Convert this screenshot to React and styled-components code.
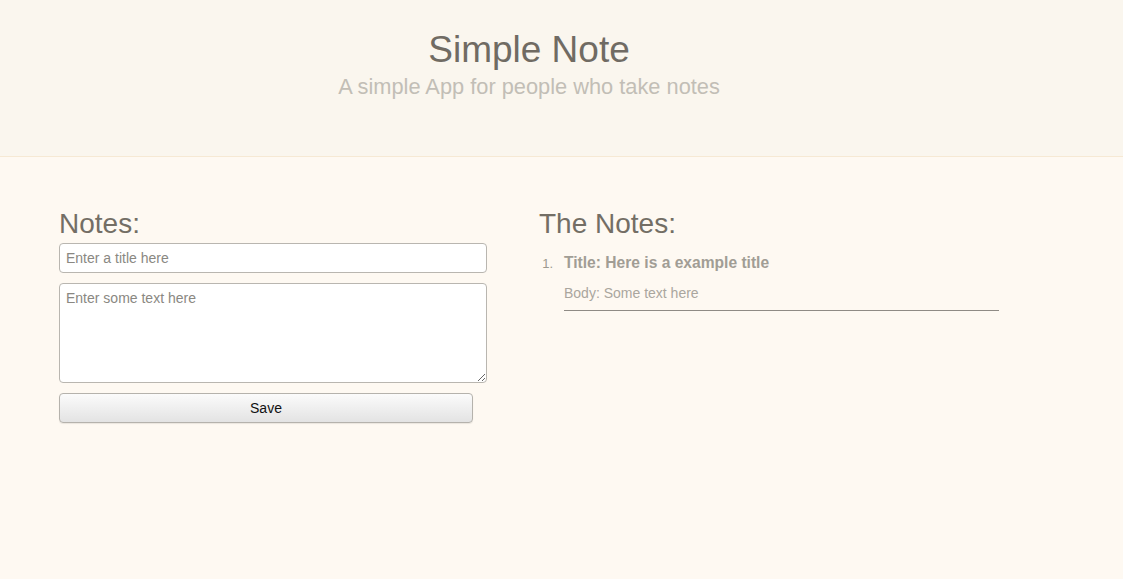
import React from "react";
import styled, { createGlobalStyle } from "styled-components";

const Global = createGlobalStyle`
  html, body { margin: 0; padding: 0; }
  body {
    background: #fef9f2;
    font-family: "Liberation Sans", Arial, sans-serif;
    width: 1123px;
    height: 579px;
    overflow: hidden;
  }
`;

const Header = styled.header`
  height: 157px;
  background: #faf6ee;
  border-bottom: 1px solid #f6e9d4;
  display: flex;
  flex-direction: column;
  align-items: center;
  padding: 29px 65px 0 0;
  box-sizing: border-box;
`;

const Title = styled.h1`
  margin: 0;
  font-size: 37px;
  font-weight: normal;
  color: #706b63;
  line-height: 42px;
`;

const Subtitle = styled.p`
  margin: 0;
  font-size: 21.8px;
  color: #c2beb6;
  line-height: 26px;
  margin-top: 3px;
`;

const Main = styled.main`
  display: grid;
  grid-template-columns: 428px 460px;
  column-gap: 52px;
  padding: 50px 0 0 59px;
`;

const Column = styled.section`
  display: flex;
  flex-direction: column;
`;

const Heading = styled.h2`
  margin: 0;
  font-size: 28px;
  font-weight: normal;
  color: #736e65;
  line-height: 34px;
`;

const Input = styled.input`
  box-sizing: border-box;
  width: 428px;
  height: 30px;
  margin-top: 2px;
  border: 1px solid #b9b6b0;
  border-radius: 4px;
  background: #fff;
  padding: 0 6px;
  font-family: inherit;
  font-size: 14px;
  color: #333;
  &::placeholder { color: #8a8882; }
`;

const TextArea = styled.textarea`
  box-sizing: border-box;
  width: 428px;
  height: 100px;
  margin-top: 10px;
  border: 1px solid #b9b6b0;
  border-radius: 4px;
  background: #fff;
  padding: 6px 6px;
  font-family: inherit;
  font-size: 14px;
  resize: vertical;
  display: block;
  &::placeholder { color: #8a8882; }
`;

const Button = styled.button`
  box-sizing: border-box;
  width: 414px;
  height: 30px;
  margin-top: 10px;
  border: 1px solid #b5b2ac;
  border-radius: 4px;
  background: linear-gradient(#fbfbfb, #e3e3e3);
  font-family: inherit;
  font-size: 14px;
  color: #111;
  box-shadow: 0 1px 1px rgba(0,0,0,0.08);
`;

const List = styled.ol`
  margin: 12px 0 0 0;
  padding: 0 0 0 25px;
  color: #a39f97;
  font-size: 13px;
`;

const Item = styled.li`
  width: 435px;
  border-bottom: 1px solid #8f8b85;
  padding-bottom: 9px;
  &::marker { content: "1.\\00a0\\00a0\\00a0"; font-size: 13px; color: #9d998f; }
`;

const NoteTitle = styled.h3`
  margin: 0;
  font-size: 15.6px;
  font-weight: bold;
  color: #a19d95;
  line-height: 20px;
`;

const NoteBody = styled.p`
  margin: 12px 0 0 0;
  font-size: 14px;
  color: #aaa69e;
  line-height: 16px;
`;

export default function App() {
  return (
    <>
      <Global />
      <Header>
        <Title>Simple Note</Title>
        <Subtitle>A simple App for people who take notes</Subtitle>
      </Header>
      <Main>
        <Column>
          <Heading>Notes:</Heading>
          <Input placeholder="Enter a title here" />
          <TextArea placeholder="Enter some text here" />
          <Button>Save</Button>
        </Column>
        <Column>
          <Heading>The Notes:</Heading>
          <List>
            <Item>
              <NoteTitle>Title: Here is a example title</NoteTitle>
              <NoteBody>Body: Some text here</NoteBody>
            </Item>
          </List>
        </Column>
      </Main>
    </>
  );
}
